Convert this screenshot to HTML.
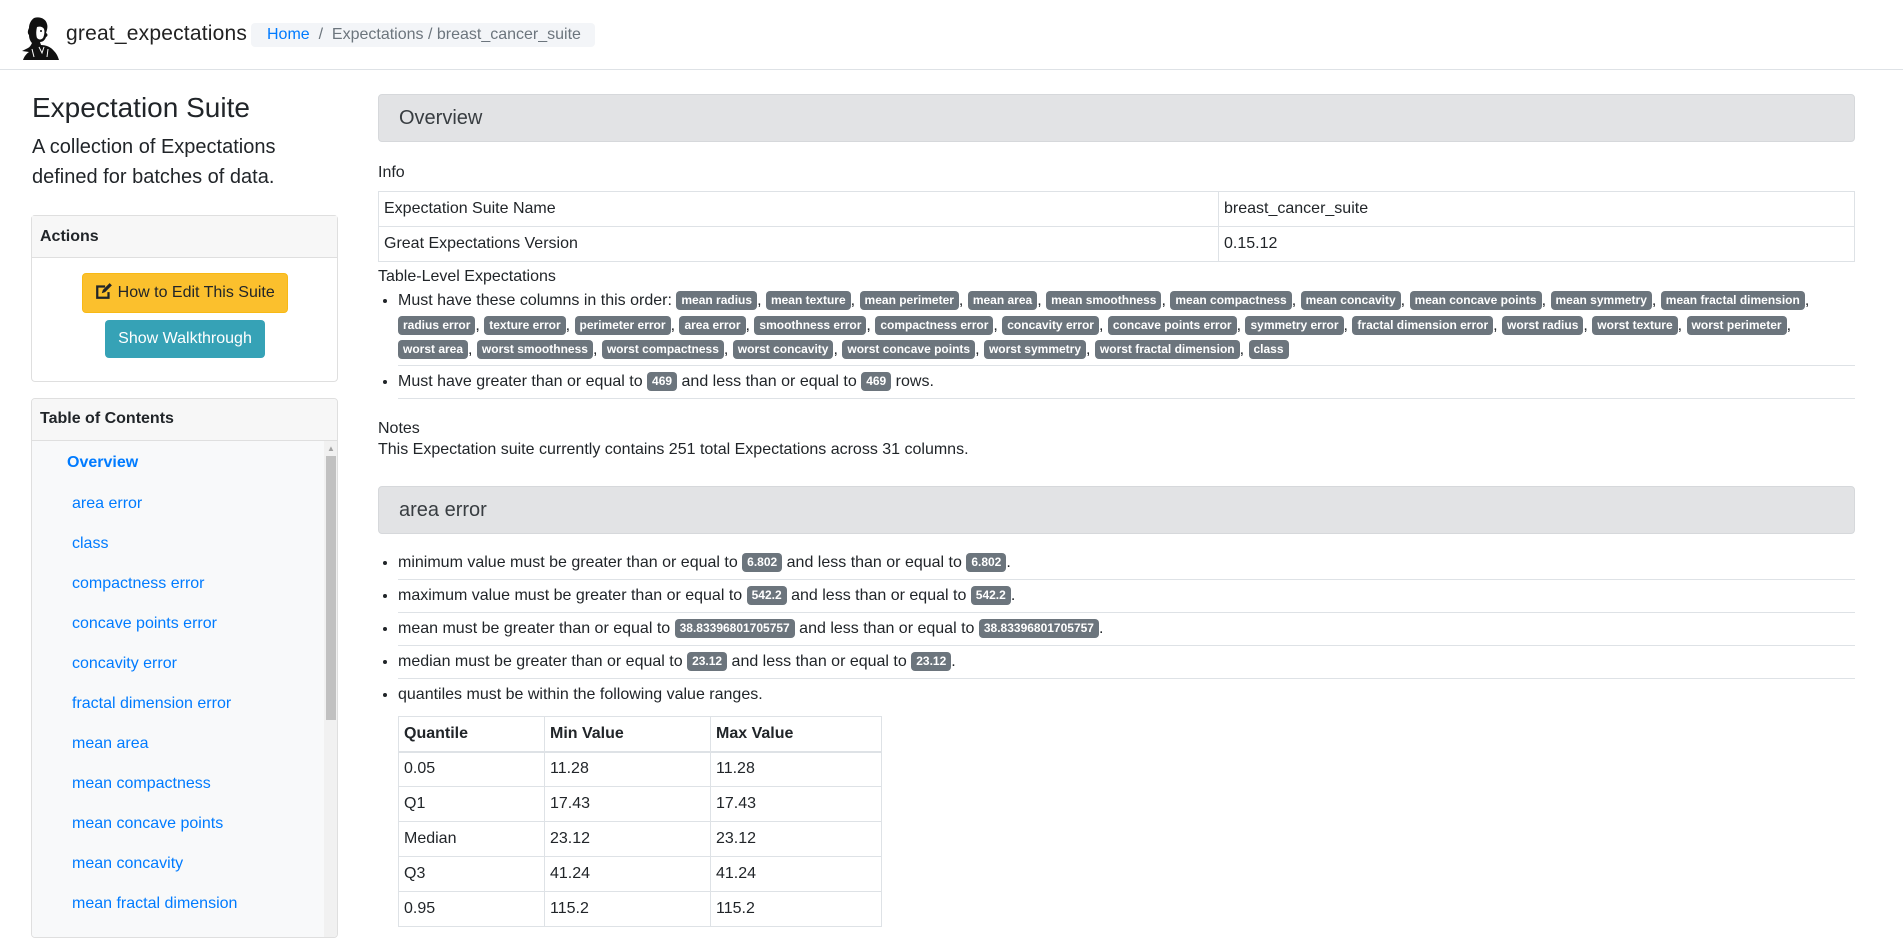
<!DOCTYPE html>
<html><head><meta charset="utf-8"><style>
*{box-sizing:border-box}
body{margin:0;width:1903px;height:918px;overflow:hidden;font-family:"Liberation Sans",sans-serif;font-size:16px;color:#212529;background:#fff;position:relative}
.abs{position:absolute}
.hdr{left:0;top:0;width:1903px;height:70px;border-bottom:1px solid #dee2e6}
.brand{left:66px;top:22px;font-family:"Liberation Sans",sans-serif;font-size:21px;color:#222;letter-spacing:0.2px}
.bc{left:251px;top:23px;width:344px;height:24px;background:#f3f5f8;border-radius:4px;font-size:16px;line-height:24px;padding-left:16px;color:#6c757d}
.bc a{color:#007bff;text-decoration:none}
.card{border:1px solid #dfdfdf;border-radius:4px;background:#fff}
.ch{background:#f7f7f7;border-bottom:1px solid #dfdfdf;font-weight:bold;padding-left:8px}
.btn{position:absolute;border-radius:4px;font-size:16px;text-align:center;line-height:38px}
.toc a{position:absolute;color:#007bff;text-decoration:none;font-size:16px;line-height:20px}
.sec{left:378px;width:1477px;height:48px;background:#e2e3e5;border:1px solid #d6d8db;border-radius:4px;font-size:20px;line-height:46px;padding-left:20px;color:#383d41}
table{border-collapse:collapse}
td,th{border:1px solid #dee2e6;height:35px;padding:0 5px;text-align:left;font-size:16px}
.b{display:inline-block;background:#6c757d;color:#fff;font-size:12px;font-weight:bold;line-height:12px;padding:3px 5px 4px;border-radius:4px;vertical-align:1px}
ul{margin:0;padding-left:20px;list-style:disc}
.tl li{line-height:24.5px}
.sp li{line-height:24px;padding:4px 0;border-bottom:1px solid #dee2e6}
</style></head><body>
<div class="abs hdr"></div>
<svg class="abs" style="left:20px;top:16px" width="42" height="45" viewBox="0 0 42 45">
<path d="M14 2c6-2 12 1 13 6 1 3 0 6-1 9 2 1 2 3 0 4-1 3-3 5-6 5l1 3c5 0 10 2 13 6 3 3 4 6 5 9H3c1-3 3-6 6-8l-7-1 6-3c2-1 3-3 4-5-2-2-3-5-3-8-2-2-1-5 0-7 0-4 2-8 5-10z" fill="#111"/>
<path d="M17 11c3-1 6 0 7 2 1 3 0 7-1 9-2 2-4 2-6 0-1-3-1-7 0-11z" fill="#fff"/>
<path d="M19 31l3 6 2-6M12 33l2 8M28 33l-1 8" stroke="#fff" stroke-width="1" fill="none"/>
<circle cx="21" cy="15" r="1" fill="#111"/>
</svg>
<div class="abs brand">great_expectations</div>
<div class="abs bc"><a>Home</a>&nbsp; / &nbsp;Expectations / breast_cancer_suite</div>

<div class="abs" style="left:32px;top:92px;font-size:28px;line-height:32px">Expectation Suite</div>
<div class="abs" style="left:32px;top:132px;font-size:20px;line-height:30px">A collection of Expectations<br>defined for batches of data.</div>

<div class="abs card" style="left:31px;top:215px;width:307px;height:167px">
<div class="ch" style="height:42px;line-height:41px">Actions</div>
<div class="btn" style="left:50px;top:57px;width:206px;background:#fbc02d;color:#212529;border:1px solid #f8b915">
<svg width="18" height="18" viewBox="0 0 16 16" style="vertical-align:-3px"><path d="M1 3h8v2H3v8h8V9h2v6H1z" fill="#212529"/><path d="M6 10l1-3 6-6 2 2-6 6z" fill="#212529"/></svg> How to Edit This Suite</div>
<div class="btn" style="left:73px;top:104px;width:160px;background:#36a2b6;color:#fff">Show Walkthrough</div>
</div>

<div class="abs card" style="left:31px;top:398px;width:307px;height:540px;overflow:hidden">
<div class="ch" style="height:42px;line-height:40px">Table of Contents</div>
<div class="abs" style="left:0;top:42px;width:292px;height:500px;background:#f8f9fa"></div>
<div class="abs" style="left:292px;top:42px;width:14px;height:500px;background:#f1f1f1"></div>
<div class="abs" style="left:294px;top:57px;width:10px;height:264px;background:#c1c1c1"></div>
<div class="abs" style="left:295px;top:45px;font-size:8px;color:#a3a3a3">▲</div>
<div class="toc">
<a style="left:35px;top:54px;font-weight:bold">Overview</a>
<a style="left:40px;top:95px">area error</a>
<a style="left:40px;top:135px">class</a>
<a style="left:40px;top:175px">compactness error</a>
<a style="left:40px;top:215px">concave points error</a>
<a style="left:40px;top:255px">concavity error</a>
<a style="left:40px;top:295px">fractal dimension error</a>
<a style="left:40px;top:335px">mean area</a>
<a style="left:40px;top:375px">mean compactness</a>
<a style="left:40px;top:415px">mean concave points</a>
<a style="left:40px;top:455px">mean concavity</a>
<a style="left:40px;top:495px">mean fractal dimension</a>
</div></div>

<div class="abs sec" style="top:94px">Overview</div>
<div class="abs" style="left:378px;top:164px">Info</div>
<table class="abs" style="left:378px;top:191px;width:1477px">
<tr><td style="width:840px">Expectation Suite Name</td><td>breast_cancer_suite</td></tr>
<tr><td>Great Expectations Version</td><td>0.15.12</td></tr>
</table>
<div class="abs" style="left:378px;top:268px">Table-Level Expectations</div>
<div class="abs" style="left:378px;top:289px;width:1477px">
<ul class="tl" style="padding-left:20px">
<li style="border-bottom:1px solid #dee2e6;padding-bottom:2px">Must have these columns in this order: <span class="b">mean radius</span>, <span class="b">mean texture</span>, <span class="b">mean perimeter</span>, <span class="b">mean area</span>, <span class="b">mean smoothness</span>, <span class="b">mean compactness</span>, <span class="b">mean concavity</span>, <span class="b">mean concave points</span>, <span class="b">mean symmetry</span>, <span class="b">mean fractal dimension</span>,<br><span class="b">radius error</span>, <span class="b">texture error</span>, <span class="b">perimeter error</span>, <span class="b">area error</span>, <span class="b">smoothness error</span>, <span class="b">compactness error</span>, <span class="b">concavity error</span>, <span class="b">concave points error</span>, <span class="b">symmetry error</span>, <span class="b">fractal dimension error</span>, <span class="b">worst radius</span>, <span class="b">worst texture</span>, <span class="b">worst perimeter</span>,<br><span class="b">worst area</span>, <span class="b">worst smoothness</span>, <span class="b">worst compactness</span>, <span class="b">worst concavity</span>, <span class="b">worst concave points</span>, <span class="b">worst symmetry</span>, <span class="b">worst fractal dimension</span>, <span class="b">class</span></li>
<li style="border-bottom:1px solid #dee2e6;margin-top:4px;padding-bottom:4px">Must have greater than or equal to <span class="b">469</span> and less than or equal to <span class="b">469</span> rows.</li>
</ul></div>
<div class="abs" style="left:378px;top:418px;line-height:21px">Notes<br>This Expectation suite currently contains 251 total Expectations across 31 columns.</div>

<div class="abs sec" style="top:486px">area error</div>
<div class="abs" style="left:378px;top:547px;width:1477px">
<ul class="sp">
<li>minimum value must be greater than or equal to <span class="b">6.802</span> and less than or equal to <span class="b">6.802</span>.</li>
<li>maximum value must be greater than or equal to <span class="b">542.2</span> and less than or equal to <span class="b">542.2</span>.</li>
<li>mean must be greater than or equal to <span class="b">38.83396801705757</span> and less than or equal to <span class="b">38.83396801705757</span>.</li>
<li>median must be greater than or equal to <span class="b">23.12</span> and less than or equal to <span class="b">23.12</span>.</li>
<li style="border:none">quantiles must be within the following value ranges.</li>
</ul></div>
<table class="abs" style="left:398px;top:716px;width:484px">
<tr><th style="width:146px;border-bottom:2px solid #dee2e6">Quantile</th><th style="width:166px;border-bottom:2px solid #dee2e6">Min Value</th><th style="border-bottom:2px solid #dee2e6">Max Value</th></tr>
<tr><td>0.05</td><td>11.28</td><td>11.28</td></tr>
<tr><td>Q1</td><td>17.43</td><td>17.43</td></tr>
<tr><td>Median</td><td>23.12</td><td>23.12</td></tr>
<tr><td>Q3</td><td>41.24</td><td>41.24</td></tr>
<tr><td>0.95</td><td>115.2</td><td>115.2</td></tr>
</table>
</body></html>
